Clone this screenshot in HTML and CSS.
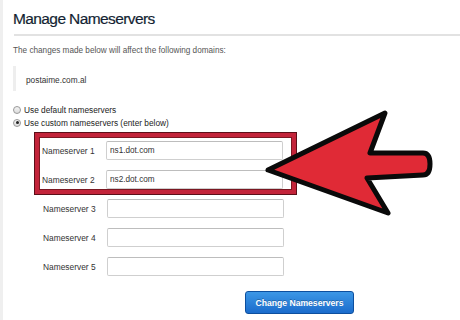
FILE: index.html
```html
<!DOCTYPE html>
<html lang="en">
<head>
    <meta charset="UTF-8">
    <meta name="viewport" content="width=device-width, initial-scale=1.0">
    <title>Manage Nameservers</title>
    <link rel="stylesheet" href="styles.css">
</head>
<body>
    <div class="page">
        <h1>Manage Nameservers</h1>
        <hr class="rule">
        <p class="intro">The changes made below will affect the following domains:</p>
        <div class="domains">postaime.com.al</div>

        <div class="choices">
            <label class="choice"><span class="radio"></span>Use default nameservers</label>
            <label class="choice"><span class="radio checked"></span>Use custom nameservers (enter below)</label>
        </div>

        <div class="highlight">
            <div class="ns-row">
                <span class="ns-label">Nameserver 1</span>
                <input class="ns-input" type="text" value="ns1.dot.com">
            </div>
            <div class="ns-row">
                <span class="ns-label">Nameserver 2</span>
                <input class="ns-input" type="text" value="ns2.dot.com">
            </div>
        </div>
        <div class="others">
            <div class="ns-row">
                <span class="ns-label">Nameserver 3</span>
                <input class="ns-input" type="text">
            </div>
            <div class="ns-row">
                <span class="ns-label">Nameserver 4</span>
                <input class="ns-input" type="text">
            </div>
            <div class="ns-row">
                <span class="ns-label">Nameserver 5</span>
                <input class="ns-input" type="text">
            </div>
        </div>

        <button class="submit-btn">Change Nameservers</button>
    </div>

    <svg class="arrow" width="460" height="320" viewBox="0 0 460 320">
        <path d="M268 170 L385 113 L370 153 L423 153 Q430 153 430 164 Q430 175 423 175 L367 178 L388 213 Z"
              fill="#e02a36" stroke="#0a0a0a" stroke-width="5" stroke-linejoin="round"/>
    </svg>
</body>
</html>
```

FILE: styles.css
```css
body {
    font-family: "Liberation Sans", Arial, sans-serif;
    background-color: #fff;
    color: #333;
    margin: 0;
    padding: 0;
}
.page {
    border-left: 3px solid #efefef;
    padding: 9px 0 0 10px;
    height: 320px;
    box-sizing: border-box;
}
h1 {
    font-size: 15.5px;
    line-height: 20px;
    font-weight: normal;
    letter-spacing: -0.6px;
    color: #131f33;
    margin: 0;
    -webkit-text-stroke: 0.2px #131f33;
}
.rule {
    border: none;
    height: 2px;
    background-color: #e2e2e2;
    margin: 5px 0 0 1px;
}
.intro {
    font-size: 8.2px;
    line-height: 12px;
    color: #555;
    margin: 9px 0 0 0;
}
.domains {
    margin-top: 9px;
    height: 25px;
    border-left: 3px solid #eee;
    padding-left: 10px;
    font-size: 8.3px;
    line-height: 28px;
    color: #333;
}
.choices {
    margin-top: 12px;
}
.choice {
    display: flex;
    align-items: center;
    height: 13px;
    font-size: 8.3px;
    color: #222;
}
.radio {
    width: 6px;
    height: 6px;
    border: 1px solid #999;
    border-radius: 50%;
    background: linear-gradient(#f4f4f4, #dcdcdc);
    margin-right: 3px;
    position: relative;
}
.radio.checked::after {
    content: "";
    position: absolute;
    top: 1.5px;
    left: 1.5px;
    width: 3px;
    height: 3px;
    border-radius: 50%;
    background-color: #222;
}
.highlight {
    display: flex;
    flex-direction: column;
    gap: 10px;
    width: 247px;
    margin: 4px 0 0 22px;
    padding: 4px 3px 1px 3px;
    border: 4px solid #c3243a;
    box-shadow: 0 0 0 1px #5c0f18, inset 0 0 0 1px #7a1822;
    background-color: #fff;
}
.others {
    display: flex;
    flex-direction: column;
    gap: 10px;
    margin-top: 5px;
    padding-left: 30px;
}
.ns-row {
    display: flex;
    align-items: center;
    height: 19px;
}
.ns-label {
    width: 64px;
    font-size: 8.4px;
    color: #333;
}
.ns-input {
    width: 177px;
    height: 19px;
    box-sizing: border-box;
    border: 1px solid #cfcfcf;
    border-top-color: #bdbdbd;
    border-radius: 2px;
    padding: 0 3px;
    font-family: "Liberation Sans", Arial, sans-serif;
    font-size: 8.2px;
    color: #333;
    background-color: #fff;
}
.submit-btn {
    display: block;
    margin: 15px 0 0 232px;
    width: 109px;
    height: 23px;
    padding: 0;
    border: 1px solid #0d4f9e;
    border-radius: 3px;
    background: linear-gradient(#3c97e6, #1b6ccc);
    color: #fff;
    font-family: "Liberation Sans", Arial, sans-serif;
    font-size: 8.6px;
    font-weight: bold;
    text-shadow: 0 -1px 0 rgba(0, 0, 0, 0.25);
    cursor: pointer;
}
.arrow {
    position: absolute;
    top: 0;
    left: 0;
    pointer-events: none;
}
```
